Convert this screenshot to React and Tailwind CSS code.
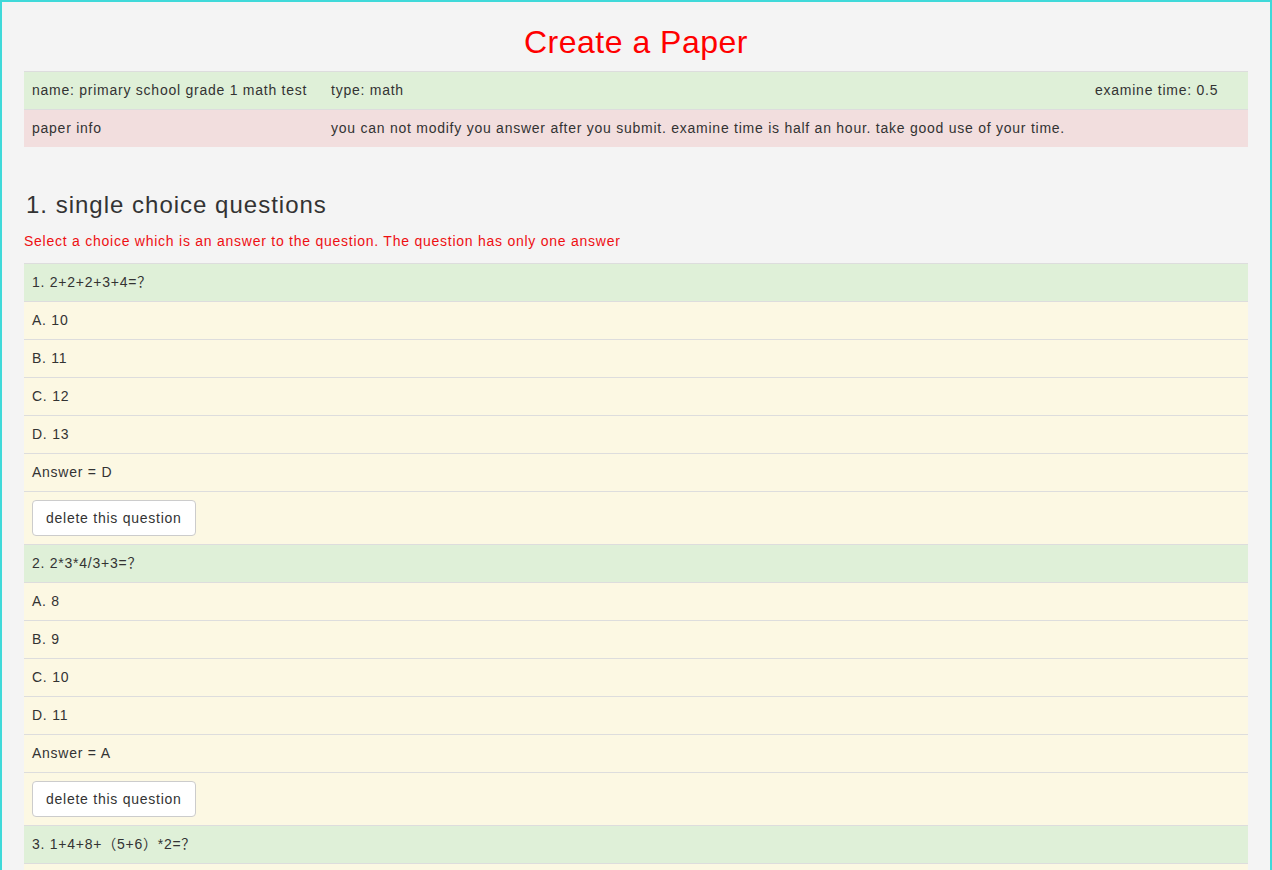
import React from 'react'

const font = { fontFamily: '"Liberation Sans", "Noto Sans CJK SC", Arial, sans-serif' }

const questions = [
  { q: '1. 2+2+2+3+4=？', options: ['A. 10', 'B. 11', 'C. 12', 'D. 13'], answer: 'D' },
  { q: '2. 2*3*4/3+3=？', options: ['A. 8', 'B. 9', 'C. 10', 'D. 11'], answer: 'A' },
  { q: '3. 1+4+8+（5+6）*2=？', options: ['A. 35', 'B. 36', 'C. 37', 'D. 38'], answer: 'A' },
]

function Row({ tone, children }) {
  const bg = tone === 'green' ? 'bg-[#dff0d8]' : tone === 'red' ? 'bg-[#f2dede]' : 'bg-[#fcf8e3]'
  return (
    <div className={`${bg} border-t border-[#dddddd] px-2 py-2 leading-[21px]`}>{children}</div>
  )
}

function Question({ item }) {
  return (
    <>
      <Row tone="green">{item.q}</Row>
      {item.options.map(o => <Row key={o}>{o}</Row>)}
      <Row>Answer = {item.answer}</Row>
      <div className="bg-[#fcf8e3] border-t border-[#dddddd] px-2 py-2">
        <button className="h-[36px] px-[13px] bg-white border border-[#cccccc] rounded text-[14px] text-[#333333] leading-[20px] tracking-[0.75px]">
          delete this question
        </button>
      </div>
    </>
  )
}

export default function App(){
  return (
    <div style={font} className="min-h-screen border-2 border-[#3fd9d9] bg-[#f4f4f4] text-[14px] tracking-[0.75px] text-[#333333]">
      <div className="px-[22px]">
        <h1 className="mt-5 mb-[9px] text-center text-[32px] leading-[40px] tracking-[0.5px] text-[#ff0000]">Create a Paper</h1>

        <div>
          <div className="flex bg-[#dff0d8] border-t border-[#dddddd] leading-[21px]">
            <div className="w-[299px] px-2 py-2">name: primary school grade 1 math test</div>
            <div className="flex-1 px-2 py-2">type: math</div>
            <div className="w-[161px] px-2 py-2">examine time: 0.5</div>
          </div>
          <div className="flex bg-[#f2dede] border-t border-[#dddddd] leading-[21px]">
            <div className="w-[299px] px-2 py-2">paper info</div>
            <div className="flex-1 px-2 py-2">you can not modify you answer after you submit. examine time is half an hour. take good use of your time.</div>
          </div>
        </div>

        <h3 className="mt-[45px] text-[24px] leading-[26px] tracking-[1px] pl-[2px]">1. single choice questions</h3>
        <p className="mt-[13px] mb-3 text-[#ee0f12] leading-[20px]">Select a choice which is an answer to the question. The question has only one answer</p>

        <div>
          {questions.map(item => <Question key={item.q} item={item} />)}
        </div>
      </div>
    </div>
  )
}
